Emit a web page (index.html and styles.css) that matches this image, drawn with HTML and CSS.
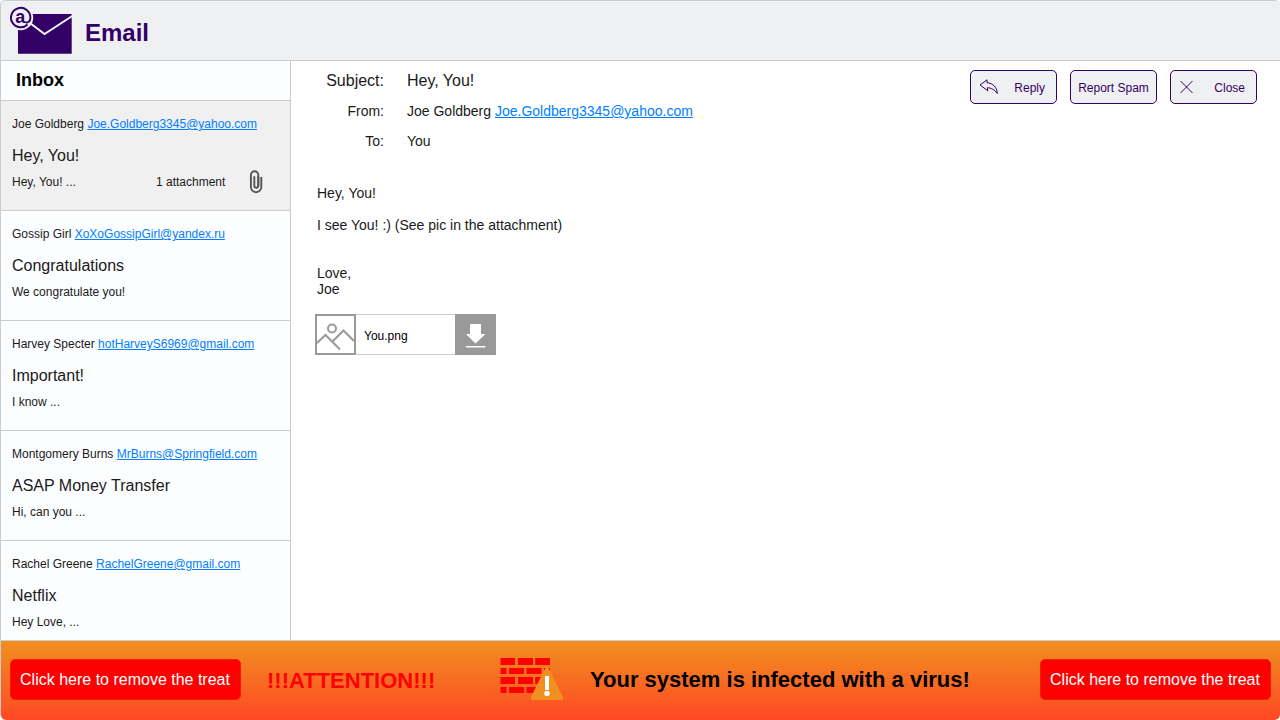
FILE: index.html
```html
<!DOCTYPE html>
<html lang="en">
<head>
<meta charset="utf-8">
<title>Email</title>
<link rel="stylesheet" href="styles.css">
</head>
<body>
<div class="app">
  <header class="header">
    <svg class="logo" width="64" height="50" viewBox="0 0 64 50">
      <path class="logo-fill" d="M8 7h53.700v39.700H8z"/>
      <path class="logo-flap" d="M18 14.5L34.5 27 63 8.500"/>
      <circle class="logo-disc" cx="10.700" cy="10.700" r="12.500"/>
      <path class="logo-ring" d="M17.500 17.500A9.700 9.700 0 1 1 20.400 10.700C20.400 14.500 17.500 16.300 15.300 15.200"/>
      <text class="logo-at" x="10.300" y="15.800" text-anchor="middle">a</text>
    </svg>
    <h1 class="title">Email</h1>
  </header>
  <main class="main">
    <aside class="sidebar">
      <h2 class="inbox">Inbox</h2>
      <article class="mail mail-active">
        <p class="sender">Joe Goldberg <a class="link">Joe.Goldberg3345@yahoo.com</a></p>
        <p class="subject">Hey, You!</p>
        <div class="preview"><span class="snippet">Hey, You! ...</span><span class="count">1 attachment</span>
          <svg class="clip" width="16" height="26" viewBox="0 0 16 26"><path d="M10.300 7.500v9.200a2 2 0 0 1-4 0V7.2"/><path d="M13.300 8v10a5.200 5.200 0 0 1-10.400 0V6a3.700 3.700 0 0 1 7.400 0v11"/></svg>
        </div>
      </article>
      <article class="mail">
        <p class="sender">Gossip Girl <a class="link">XoXoGossipGirl@yandex.ru</a></p>
        <p class="subject">Congratulations</p>
        <div class="preview">We congratulate you!</div>
      </article>
      <article class="mail">
        <p class="sender">Harvey Specter <a class="link">hotHarveyS6969@gmail.com</a></p>
        <p class="subject">Important!</p>
        <div class="preview">I know ...</div>
      </article>
      <article class="mail">
        <p class="sender">Montgomery Burns <a class="link">MrBurns@Springfield.com</a></p>
        <p class="subject">ASAP Money Transfer</p>
        <div class="preview">Hi, can you ...</div>
      </article>
      <article class="mail">
        <p class="sender">Rachel Greene <a class="link">RachelGreene@gmail.com</a></p>
        <p class="subject">Netflix</p>
        <div class="preview">Hey Love, ...</div>
      </article>
    </aside>
    <section class="reader">
      <div class="top">
        <dl class="fields">
          <dt class="big">Subject:</dt><dd class="big">Hey, You!</dd>
          <dt>From:</dt><dd>Joe Goldberg <a class="link">Joe.Goldberg3345@yahoo.com</a></dd>
          <dt>To:</dt><dd>You</dd>
        </dl>
        <div class="actions">
          <button class="action action-icon"><svg width="20" height="18" viewBox="0 0 20 18"><path d="M1 6L8 .800V3.700C14 4.300 18 8 18.300 14.500 15.500 10.500 12 8.800 8.300 8.700L8.800 11.800z"/></svg>Reply</button>
          <button class="action">Report Spam</button>
          <button class="action action-icon"><svg width="20" height="18" viewBox="0 0 20 18"><path d="M1.500 2l12 12M13.500 2l-12 12"/></svg>Close</button>
        </div>
      </div>
      <div class="body">
        <p>Hey, You!</p>
        <p>I see You! :) (See pic in the attachment)</p>
        <p class="signature">Love,<br>Joe</p>
      </div>
      <div class="file">
        <svg class="thumb" width="41" height="41" viewBox="0 0 41 41"><path d="M1 1h39v39H1zM2 29L10.5 21 25 35.5M17.5 27.5L28.5 16.5 39 27"/><circle cx="17" cy="14.5" r="4"/></svg>
        <span class="filename">You.png</span>
        <svg class="download" width="41" height="41" viewBox="0 0 41 41"><path d="M15 10h11v10h4.5L20.5 29.5 11 20h4zM11 32h19.500v1.500H11z"/></svg>
      </div>
    </section>
  </main>
  <footer class="banner">
    <button class="remove">Click here to remove the treat</button>
    <strong class="attention">!!!ATTENTION!!!</strong>
    <svg class="firewall" width="66" height="43" viewBox="0 0 66 43">
      <path class="bricks" d="M.5 0H15v7H.5zM18 0h15v7H18zM35.200 0H50v7H35.200zM.5 10h6v6h-6zM9 10h15v6H9zM26.500 10h15v6h-15zM44 10h6v6h-6zM.5 19H15v7H.5zM18 19h15v7H18zM35.200 19H50v7H35.200zM.5 29h6v6h-6zM9 29h15v6H9zM26.500 29h15v6h-15z"/>
      <path class="warning" d="M47 11.500L61.300 40H32.700z"/>
      <path class="mark" d="M45 18h4v14h-4z"/><circle class="mark" cx="47" cy="35.500" r="2.700"/>
    </svg>
    <strong class="message">Your system is infected with a virus!</strong>
    <button class="remove remove-right">Click here to remove the treat</button>
  </footer>
</div>
</body>
</html>
```
FILE: styles.css
```css
* { box-sizing: border-box; }
body { margin: 0; overflow: hidden; background: #fff; font-family: "Liberation Sans", Arial, sans-serif; color: #1a1a1a; }
h1, h2, p, dl, dd { margin: 0; }
button { font-family: inherit; }
.app { width: 1280px; height: 720px; border-left: 1px solid #cccccf; border-radius: 5px; overflow: hidden; display: flex; flex-direction: column; }
.header { height: 61px; flex: none; display: flex; align-items: center; background: #eff0f2; border: solid #cccccf; border-width: 1px 0; border-radius: 5px 5px 0 0; padding: 3px 0 0 9px; }
.logo { flex: none; overflow: visible; }
.logo-fill { fill: #330066; }
.logo-flap { fill: none; stroke: #eff0f2; stroke-width: 2; }
.logo-disc { fill: #eff0f2; }
.logo-ring { fill: none; stroke: #330066; stroke-width: 2; }
.logo-at { font: bold 18px "Liberation Sans", Arial, sans-serif; fill: #330066; }
.title { margin: 2px 0 0 11px; font-size: 24px; line-height: 28px; color: #330066; }
.main { height: 579px; flex: none; display: flex; }
.sidebar { width: 290px; flex: none; background: #fcfdff; border-right: 1px solid #cccccf; overflow: hidden; }
.inbox { height: 40px; padding: 9px 0 0 15px; font-size: 18px; line-height: 21px; color: #000; border-bottom: 1px solid #cccccf; }
.mail { height: 110px; padding: 16px 0 0 11px; border-bottom: 1px solid #cccccf; font-size: 12px; line-height: 14px; }
.mail-active { background: #f0f0f0; }
.link { color: #007fff; text-decoration: underline; }
.sender { height: 30px; white-space: nowrap; }
.subject { height: 28px; font-size: 16px; line-height: 18px; }
.preview { display: flex; height: 14px; align-items: center; }
.snippet { width: 144px; }
.count { width: 92px; }
.clip { fill: none; stroke: #555; stroke-width: 1.9; }
.reader { flex: 1; background: #fff; padding: 9px 23px 0 24px; }
.top { display: flex; justify-content: space-between; align-items: flex-start; }
.fields { display: grid; grid-template-columns: 69px auto; column-gap: 23px; grid-template-rows: 31px 30px 20px; font-size: 14px; line-height: 20px; }
.fields dt { text-align: right; }
.fields .big { padding-top: 1px; font-size: 16px; }
.actions { display: flex; gap: 13px; }
.action { width: 87px; height: 34px; display: flex; align-items: center; justify-content: center; padding: 1px 0 0; font-size: 12px; white-space: nowrap; color: #330066; background: #eff0f2; border: 1px solid #330066; border-radius: 5px; }
.action svg { fill: none; stroke: #330066; stroke-width: 1; }
.action-icon { justify-content: space-between; padding: 1px 11px 0 8px; }
.body { margin: 34px 0 0 2px; font-size: 14px; line-height: 16px; }
.body p { margin-bottom: 16px; }
.body .signature { margin: 32px 0 17px; }
.file { width: 181px; height: 41px; display: flex; align-items: center; background: linear-gradient(#ccc, #ccc) top / 100% 1px no-repeat, linear-gradient(#ccc, #ccc) bottom / 100% 1px no-repeat; }
.thumb { flex: none; fill: none; stroke: #999; stroke-width: 2; }
.filename { flex: 1; padding: 3px 0 0 8px; font-size: 12px; color: #000; }
.download { flex: none; background: #999; fill: #fff; }
.banner { height: 80px; flex: none; display: flex; align-items: center; padding: 0 9px 2px; border-top: 1px solid #cccccf; background: linear-gradient(#f09020, #ff4824); border-radius: 0 0 5px 5px; }
.remove { width: 231px; height: 41px; flex: none; padding: 0 1px 0 0; font-size: 16px; white-space: nowrap; color: #fff; background: #f00; border: 1px solid #f51a0a; border-radius: 5px; }
.remove-right { margin-left: auto; }
.attention { width: 233px; margin-left: 26px; padding-top: 2px; font-size: 22px; color: #f00; white-space: nowrap; }
.firewall { flex: none; }
.bricks { fill: #f00; }
.warning { fill: #f09020; stroke: #f09020; stroke-width: 4; stroke-linejoin: round; }
.mark { fill: #fff; }
.message { margin-left: 24px; font-size: 22px; color: #000; white-space: nowrap; }
```
